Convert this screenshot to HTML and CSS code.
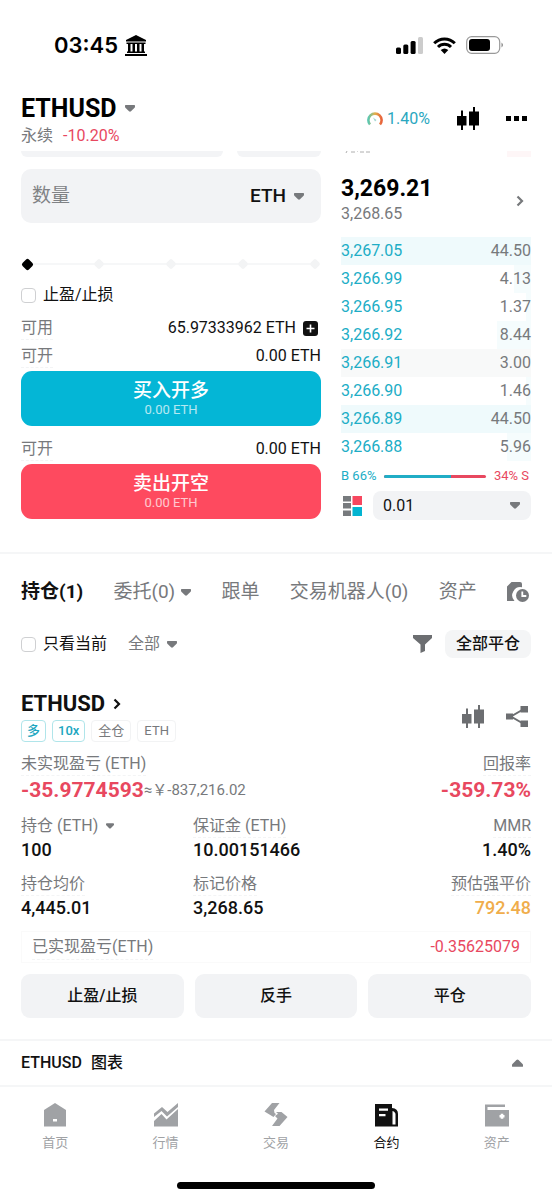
FILE: index.html
```html
<!DOCTYPE html>
<html lang="zh-CN">
<head>
<meta charset="utf-8">
<meta name="viewport" content="width=device-width, initial-scale=1">
<title>ETHUSD 永续</title>
<link rel="stylesheet" href="styles.css">
</head>
<body>
<svg class="defs" width="0" height="0" aria-hidden="true">
  <symbol id="down" viewBox="0 0 10 7"><path d="M.6 0h8.800q.6 0 .6.6v1.200q0 .5-.4.900L6 6.200q-1 .9-2 0L.4 2.700Q0 2.300 0 1.800V.6Q0 0 .6 0z"/></symbol>
  <symbol id="candles" viewBox="0 0 22 23"><path d="M0 9h4V3.500h2V9h3.500v9.500H6V23H4v-4.500H0zM12 4.500h4V0h2v4.500h4V18.500h-4V23h-2v-4.500h-4z"/></symbol>
  <symbol id="next" viewBox="0 0 8 12"><path d="M1.500 1.500 6 6l-4.500 4.500" fill="none" stroke="currentColor" stroke-width="2.200"/></symbol>
</svg>
<div class="app">
  <div class="status">
    <div class="status-time">03:45
      <svg width="22" height="21" viewBox="0 0 22 21"><path d="M11 0 21 5v1.500H1V5zM1.500 7.500h19V9h-19zM3 9h2.500v8H3zM7.500 9H10v8H7.500zM12 9h2.500v8H12zM16.500 9H19v8h-2.500zM2 16.500h18V18H2zM0 19h22v2H0z"/></svg>
    </div>
    <div class="status-icons">
      <svg width="27" height="17" viewBox="0 0 27 17"><rect y="10.500" width="5" height="6.500" rx="1.500"/><rect x="7.300" y="7.500" width="5" height="9.500" rx="1.500"/><rect x="14.600" y="4" width="5" height="13" rx="1.500"/><rect x="22" width="5" height="17" rx="1.500" fill="#ccc"/></svg>
      <svg width="23" height="17" viewBox="0 0 23 17"><g fill="none" stroke="#000" stroke-width="3"><path d="M1.200 6.200a14.600 14.600 0 0 1 20.600 0"/><path d="M5 10a9.200 9.200 0 0 1 13 0"/></g><path d="M11.500 17 7.700 13q3.800-3 7.600 0z"/></svg>
      <svg width="38" height="18" viewBox="0 0 38 18"><rect x=".7" y=".7" width="33" height="16.600" rx="5" fill="none" stroke="#999" stroke-width="1.200"/><rect x="3" y="3" width="21" height="12" rx="3"/><path d="M35.500 6.500q3 2.500 0 5z" fill="#888"/></svg>
    </div>
  </div>

  <header class="top">
    <div>
      <h1 class="pair">ETHUSD <svg class="tri" width="10" height="7"><use href="#down"/></svg></h1>
      <div class="sub"><span>永续</span><span class="red">-10.20%</span></div>
    </div>
    <div class="tools">
      <div class="gauge">
        <svg width="16" height="16" viewBox="0 0 16 16"><defs><linearGradient id="g"><stop offset="0" stop-color="#5cc7b0"/><stop offset=".5" stop-color="#e3b04a"/><stop offset="1" stop-color="#e8633c"/></linearGradient></defs><path d="M3 13.500A6.600 6.600 0 1 1 13 13.500" fill="none" stroke="url(#g)" stroke-width="2.600"/><path d="m6 6.500 3.500 2.500L8 10.500z" fill="#9fd6cf"/></svg>
        <span>1.40%</span>
      </div>
      <button class="icon" aria-label="K线"><svg width="22" height="23"><use href="#candles"/></svg></button>
      <button class="icon" aria-label="更多"><svg width="21" height="5" viewBox="0 0 21 5"><path d="M0 0h5v5H0zM8 0h5v5H8zM16 0h5v5h-5z"/></svg></button>
    </div>
  </header>

  <main>
    <section class="trade">
      <form class="order">
        <div class="peek"><i></i><i></i></div>
        <div class="amount">
          <input type="text" aria-label="数量" placeholder="数量">
          <select class="unit" aria-label="单位"><option>ETH</option></select>
          <svg class="tri" width="10" height="7"><use href="#down"/></svg>
        </div>
        <div class="slider">
          <div class="ticks"><i></i><i></i><i></i><i></i><i></i></div>
          <input type="range" min="0" max="100" value="0" aria-label="仓位比例">
        </div>
        <label class="check tpsl"><input type="checkbox">止盈/止损</label>
        <div class="line"><span class="hint">可用</span><span class="avail">65.97333962 ETH <button type="button" class="icon" aria-label="划转"><svg width="15" height="15" viewBox="0 0 15 15"><rect width="15" height="15" rx="3"/><path d="M7.500 3.500v8M3.500 7.500h8" stroke="#fff" stroke-width="1.600"/></svg></button></span></div>
        <div class="line"><span class="hint">可开</span><span>0.00 ETH</span></div>
        <button type="button" class="submit buy">买入开多<small>0.00 ETH</small></button>
        <div class="line second"><span class="hint">可开</span><span>0.00 ETH</span></div>
        <button type="button" class="submit sell">卖出开空<small>0.00 ETH</small></button>
      </form>

      <div class="book">
        <div class="book-peek"><svg width="27" height="6" viewBox="0 0 27 6"><path d="M3 0 2 2M7 1h4M13 0h1M16 1h4M22 1h4" fill="none" stroke="#999" stroke-width=".8"/></svg><i></i></div>
        <a class="last" href="#book">
          <span><strong>3,269.21</strong><span class="mark">3,268.65</span></span>
          <svg width="8" height="12"><use href="#next"/></svg>
        </a>
        <table>
          <tr class="full"><td>3,267.05</td><td>44.50</td></tr>
          <tr class="d9"><td>3,266.99</td><td>4.13</td></tr>
          <tr class="d3"><td>3,266.95</td><td>1.37</td></tr>
          <tr class="d18"><td>3,266.92</td><td>8.44</td></tr>
          <tr class="flash"><td>3,266.91</td><td>3.00</td></tr>
          <tr class="d3"><td>3,266.90</td><td>1.46</td></tr>
          <tr class="full"><td>3,266.89</td><td>44.50</td></tr>
          <tr class="d13"><td>3,266.88</td><td>5.96</td></tr>
        </table>
        <div class="ratio"><span class="teal">B 66%</span><div class="bar"><i style="width:66%"></i></div><span class="red">34% S</span></div>
        <div class="depth">
          <button class="icon" aria-label="盘口布局"><svg width="19" height="20" viewBox="0 0 19 20"><path d="M0 0h8v5.500H0zM0 7h8v5.500H0zM0 14.500h8V20H0z" fill="#777a7d"/><path d="M9.500 0H19v9H9.500z" fill="#f7475f"/><path d="M9.500 11H19v9H9.500z" fill="#03b4d1"/></svg></button>
          <div class="step"><select aria-label="精度"><option>0.01</option></select><svg class="tri" width="10" height="7"><use href="#down"/></svg></div>
        </div>
      </div>
    </section>

    <section class="holdings">
      <nav class="tabs">
        <a class="on" href="#pos">持仓(1)</a>
        <a href="#orders">委托(0) <svg class="tri" width="10" height="7"><use href="#down"/></svg></a>
        <a href="#copy">跟单</a>
        <a href="#bots">交易机器人(0)</a>
        <a href="#assets">资产</a>
        <button class="icon" aria-label="历史"><svg width="22" height="21" viewBox="0 0 22 21"><path d="M4.500 0H13q2 0 2 2v3.300A8.200 8.200 0 0 0 7.500 19H0V4.500z"/><circle cx="15.500" cy="13.500" r="6.500"/><path d="M15.300 9.500v4.500h4" fill="none" stroke="#fff" stroke-width="1.800"/></svg></button>
      </nav>
      <div class="filters">
        <label class="check"><input type="checkbox">只看当前</label>
        <button class="all">全部 <svg class="tri" width="10" height="7"><use href="#down"/></svg></button>
        <button class="icon funnel" aria-label="筛选"><svg width="19" height="18" viewBox="0 0 19 18"><path d="M0 0h19v3l-7 6.500V16l-4.500 2V9.500L0 3z"/></svg></button>
        <button class="close-all">全部平仓</button>
      </div>

      <article class="position">
        <div class="pos-head">
          <div>
            <h2>ETHUSD <svg width="8" height="12"><use href="#next"/></svg></h2>
            <div class="tags"><span class="tag on">多</span><span class="tag on">10x</span><span class="tag">全仓</span><span class="tag">ETH</span></div>
          </div>
          <div class="pos-tools">
            <button class="icon" aria-label="K线"><svg width="22" height="23"><use href="#candles"/></svg></button>
            <button class="icon" aria-label="分享"><svg width="22" height="21" viewBox="0 0 22 21"><path d="M0 7.500h7v6H0zM14.500 0H22v6.500h-7.500zM14.500 14.500H22V21h-7.500z"/><path d="M17 3.500 5 10.500l12 7" fill="none" stroke="currentColor" stroke-width="2"/></svg></button>
          </div>
        </div>
        <dl class="pnl">
          <div><dt><span class="hint">未实现盈亏 (ETH)</span></dt><dd><strong>-35.9774593</strong><span>≈￥-837,216.02</span></dd></div>
          <div class="end"><dt><span class="hint">回报率</span></dt><dd><strong>-359.73%</strong></dd></div>
        </dl>
        <dl class="stats">
          <div><dt>持仓 (ETH) <svg class="tri small" width="8" height="6"><use href="#down"/></svg></dt><dd>100</dd></div>
          <div><dt><span class="hint">保证金 (ETH)</span></dt><dd>10.00151466</dd></div>
          <div class="end"><dt><span class="hint">MMR</span></dt><dd>1.40%</dd></div>
          <div><dt><span class="hint">持仓均价</span></dt><dd>4,445.01</dd></div>
          <div><dt><span class="hint">标记价格</span></dt><dd>3,268.65</dd></div>
          <div class="end"><dt><span class="hint">预估强平价</span></dt><dd class="orange">792.48</dd></div>
        </dl>
        <div class="realized"><span class="hint">已实现盈亏(ETH)</span><span class="red">-0.35625079</span></div>
        <div class="actions"><button>止盈/止损</button><button>反手</button><button>平仓</button></div>
      </article>
    </section>
  </main>

  <button class="chart"><span>ETHUSD</span><span>图表</span><svg class="tri up" width="11" height="8"><use href="#down"/></svg></button>

  <nav class="bottom">
    <a href="#home"><svg width="24" height="24" viewBox="0 0 24 24"><path d="M12 0 23 7v16.500H1V7z"/><path d="M10 16h4v2.500h-4z" fill="#fff"/></svg>首页</a>
    <a href="#market"><svg width="24" height="24" viewBox="0 0 24 24"><path d="M0 18 7.500 11l5 5.500L24 6v17.500H0z"/><path d="M0 10.500 8 4l5.500 5L24 0v4L13 13.500 7.500 8 0 14z"/></svg>行情</a>
    <a href="#trade"><svg width="24" height="24" viewBox="0 0 24 24"><path d="M8 0h7.500L10 7l.5 3 1.500 1-2.500 3L.5 8.500z"/><path d="M12 9h5.500l6 5-8 9H8l5.500-7.500-2.500-2.500 3-2.200z"/></svg>交易</a>
    <a class="on" href="#futures"><svg width="24" height="24" viewBox="0 0 24 24"><path d="M1 1h17v4q6 .5 6 6v12.500H1z"/><path d="M5 5.500h9v2.200H5zM5 11h6.500v2.200H5z" fill="#fff"/><path d="M18.500 8q3 1 3 3.500v10h-3z" fill="#fff"/></svg>合约</a>
    <a href="#wallet"><svg width="24" height="24" viewBox="0 0 24 24"><path d="M0 1.500h20v2.500H2.500v3H24v16.500H0z"/><path d="M17 10.700v5M14.500 13.200h5" stroke="#fff" stroke-width="2.600"/></svg>资产</a>
  </nav>
  <div class="home-bar"></div>
</div>
</body>
</html>
```
FILE: styles.css
```css
* { box-sizing: border-box; }
body {
  margin: 0;
  background: #fff;
  color: #111;
  font: 16px/24px Roboto, "Noto Sans CJK SC", sans-serif;
}
h1, h2, dl, dd { margin: 0; }
a { color: inherit; text-decoration: none; }
button, input, select { font: inherit; color: inherit; border: 0; background: none; padding: 0; margin: 0; }
select { appearance: none; outline: 0; }
svg { display: block; flex: none; fill: currentColor; }
.defs { position: absolute; }
.icon { display: flex; }
.tri { color: #77797c; }
.up { transform: rotate(180deg); }
.red { color: #e8485f; }
.teal { color: #20adc6; }
.hint { color: #77797c; border-bottom: 1px dashed #f3f4f5; }

.status { display: flex; justify-content: space-between; align-items: center; height: 90px; padding: 0 48px 0 54px; color: #000; }
.status-time { display: flex; align-items: center; gap: 7px; font: 600 22px/28px Inter, sans-serif; }
.status-icons { display: flex; align-items: center; gap: 10px; }

.top { display: flex; justify-content: space-between; align-items: center; height: 61px; padding: 0 25px 0 21px; }
.pair { display: flex; align-items: center; gap: 8px; font-size: 25px; line-height: 30px; font-weight: 700; color: #000; }
.sub { display: flex; gap: 10px; color: #77797c; }
.tools { display: flex; align-items: center; gap: 27px; padding-bottom: 4px; color: #000; }
.gauge { display: flex; align-items: center; gap: 4px; color: #2aa7c0; }

.trade { display: grid; grid-template-columns: 300fr 190fr; gap: 20px; padding: 0 21px 32px; border-bottom: 2px solid #f5f6f7; }
.order { display: flex; flex-direction: column; min-width: 0; }
.peek { display: grid; grid-template-columns: 202fr 84fr; gap: 14px; height: 6px; margin-bottom: 12px; }
.peek i { background: #f3f4f6; border-radius: 0 0 10px 10px; }
.amount { display: flex; align-items: center; gap: 8px; height: 54px; padding: 0 17px 0 11px; border-radius: 10px; background: #f2f3f5; font-size: 19px; }
.amount input { flex: 1; min-width: 0; }
.amount input::placeholder { color: #808285; opacity: 1; }
.unit { font-weight: 500; }
.slider { display: grid; margin: 29px 0 7px; height: 24px; align-items: center; }
.slider > * { grid-area: 1 / 1; }
.ticks { display: flex; justify-content: space-between; align-items: center; height: 2px; margin: 0 2px; background: #f6f7f8; }
.ticks i { width: 8px; height: 8px; background: #f3f4f5; transform: rotate(45deg); border-radius: 2px; }
.slider input { appearance: none; width: 100%; height: 24px; padding: 0 2px; }
.slider input::-webkit-slider-thumb { appearance: none; width: 9px; height: 9px; background: #000; border-radius: 2px; transform: rotate(45deg); }
.check { display: flex; align-items: center; gap: 7px; }
.check input { appearance: none; width: 15px; height: 15px; border: 1px solid #cfd0d2; border-radius: 4px; }
.tpsl { margin-bottom: 7px; }
.line { display: flex; justify-content: space-between; align-items: center; height: 28px; }
.line .hint { line-height: 22px; }
.avail { display: flex; align-items: center; gap: 7px; padding-right: 3px; }
.submit { display: flex; flex-direction: column; align-items: center; justify-content: center; height: 55px; margin-top: 1px; border-radius: 11px; color: #fff; font-size: 19px; line-height: 22px; font-weight: 500; }
.submit small { font-size: 13px; line-height: 16px; font-weight: 400; opacity: .7; }
.buy { background: #04b6d6; }
.sell { background: #fe4a5f; }
.second { margin-top: 9px; }

.book { display: flex; flex-direction: column; min-width: 0; }
.book-peek { display: flex; justify-content: space-between; height: 6px; padding-left: 3px; }
.book-peek i { width: 24px; background: #fef6f7; }
.last { display: flex; align-items: center; justify-content: space-between; margin: 19px 7px 12px 0; color: #77797c; }
.last strong { display: block; font-size: 23px; line-height: 26px; color: #000; }
.mark { display: block; line-height: 23px; }
.book table { border-collapse: collapse; width: 100%; }
.book td { height: 28px; padding: 0; line-height: 28px; color: #77797c; }
.book td:first-child { color: #20adc6; }
.book td:last-child { text-align: right; }
.full { background: #effafc; }
.flash { background: #f8f9f9; }
.d3 { background: linear-gradient(to left, #f5fcfd 3%, transparent 3%); }
.d9 { background: linear-gradient(to left, #f5fcfd 9%, transparent 9%); }
.d13 { background: linear-gradient(to left, #f5fcfd 13%, transparent 13%); }
.d18 { background: linear-gradient(to left, #f5fcfd 18%, transparent 18%); }
.ratio { display: flex; align-items: center; gap: 8px; height: 30px; padding-right: 2px; font-size: 13px; }
.bar { flex: 1; height: 3px; border-radius: 2px; background: #e8485f; overflow: hidden; }
.bar i { display: block; height: 3px; background: #20adc6; }
.depth { display: flex; align-items: center; gap: 11px; padding-left: 2px; }
.step { flex: 1; display: flex; align-items: center; height: 29px; padding: 0 11px 0 10px; border-radius: 8px; background: #f2f3f5; }
.step select { flex: 1; min-width: 0; }

.holdings { padding: 0 21px; }
.tabs { display: flex; justify-content: space-between; align-items: center; height: 76px; padding-right: 2px; font-size: 19px; color: #77797c; white-space: nowrap; }
.tabs a { display: flex; align-items: center; gap: 6px; }
.tabs .on { color: #111; font-weight: 700; }
.filters { display: flex; align-items: center; height: 28px; }
.all { display: flex; align-items: center; gap: 7px; margin-left: 21px; color: #77797c; }
.funnel { margin: 0 13px 0 auto; color: #6c6e71; }
.close-all { height: 28px; padding: 0 11px; border-radius: 8px; background: #f4f5f6; font-weight: 500; }

.pos-head { display: flex; justify-content: space-between; align-items: center; margin-top: 32px; }
.pos-head h2 { display: flex; align-items: center; gap: 8px; font-size: 22px; line-height: 28px; font-weight: 700; }
.tags { display: flex; gap: 6px; margin-top: 2px; }
.tag { height: 22px; padding: 0 6px; border: 1px solid #f2f3f4; border-radius: 4px; font-size: 13px; line-height: 20px; color: #77797c; }
.tag.on { padding: 0 5px; border-color: #b0e5ea; color: #20a6c0; font-weight: 500; }
.pos-tools { display: flex; align-items: center; gap: 22px; padding-right: 3px; color: #6c6e71; }
.pnl { display: flex; justify-content: space-between; margin-top: 10px; }
dt { line-height: 24px; color: #77797c; display: flex; align-items: center; gap: 8px; }
dt .hint { line-height: 23px; }
.end { text-align: right; }
.end dt { justify-content: flex-end; }
.pnl dd { display: flex; align-items: center; line-height: 28px; font-size: 15px; color: #77797c; white-space: nowrap; }
.pnl strong { color: #e8485f; font-size: 21px; }
.end dd { justify-content: flex-end; }
.stats { display: grid; grid-template-columns: repeat(3, 1fr); gap: 10px 6px; margin-top: 10px; }
.stats dd { font-size: 18px; font-weight: 500; color: #111; }
.stats .orange { color: #f0ad4b; }
.realized { display: flex; justify-content: space-between; align-items: center; height: 32px; margin-top: 11px; padding: 0 10px; border: 1px solid #fafafa; }
.actions { display: grid; grid-template-columns: repeat(3, 1fr); gap: 11px; margin-top: 11px; }
.actions button { height: 44px; border-radius: 9px; background: #f2f3f5; font-weight: 500; }

.chart { display: flex; align-items: center; gap: 9px; width: 100%; height: 48px; margin-top: 21px; padding: 0 29px 0 21px; border-top: 2px solid #f5f6f7; border-bottom: 2px solid #f5f6f7; font-weight: 500; }
.chart .tri { margin-left: auto; }
.bottom { display: grid; grid-template-columns: repeat(5, 1fr); padding-top: 16px; color: #a0a2a5; font-size: 13px; line-height: 20px; }
.bottom a { display: flex; flex-direction: column; align-items: center; gap: 6px; }
.bottom .on { color: #111; }
.home-bar { width: 36%; height: 7px; margin: 29px auto 11px; border-radius: 4px; background: #000; }
```
